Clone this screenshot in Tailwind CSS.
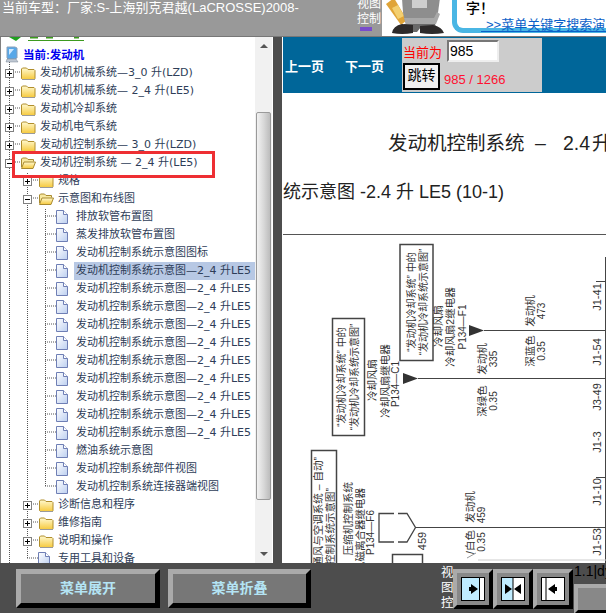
<!DOCTYPE html>
<html lang="zh">
<head>
<meta charset="utf-8">
<script src="https://cdn.jsdelivr.net/npm/@tailwindcss/browser@4"></script>
</head>
<body class="m-0 overflow-hidden bg-[#4d4d4d]">
<svg class="absolute w-0 h-0">
  <defs>
    <linearGradient id="fg" x1="0" y1="0" x2="0" y2="1"><stop offset="0" stop-color="#fff9cf"/><stop offset="1" stop-color="#f6c93c"/></linearGradient>
    <linearGradient id="pg" x1="0" y1="0" x2="1" y2="1"><stop offset="0" stop-color="#ffffff"/><stop offset="1" stop-color="#bccff0"/></linearGradient>
    <symbol id="folder" viewBox="0 0 16 14"><path d="M1.500 12.500V3l1-1h4l1.500 1.500h6l1 1v8l-1 1h-11.500z" fill="url(#fg)" stroke="#b08e2c"/><path d="M2 13.500h13" stroke="#9a9a9a"/></symbol>
    <symbol id="open" viewBox="0 0 16 14"><path d="M1.500 11V3l1-1h4l1.500 1.500h5.500v2" fill="#f8e9a0" stroke="#a98a30"/><path d="M1.500 12.500l2.500-6.500h11.500l-2.500 6.500z" fill="url(#fg)" stroke="#a98a30"/></symbol>
    <symbol id="page" viewBox="0 0 12 14"><path d="M.5.500h7l4 4v9h-11z" fill="url(#pg)" stroke="#6f7fb5"/><path d="M7.500.500v4h4" fill="#fff" stroke="#6f7fb5"/></symbol>
    <symbol id="plus" viewBox="0 0 9 9"><rect x=".5" y=".5" width="8" height="8" fill="#fff" stroke="#808080"/><path d="M2 4.500h5M4.500 2v5" stroke="#000"/></symbol>
    <symbol id="minus" viewBox="0 0 9 9"><rect x=".5" y=".5" width="8" height="8" fill="#fff" stroke="#808080"/><path d="M2 4.500h5" stroke="#000"/></symbol>
  </defs>
</svg>

<div class="w-[606px] h-[613px] flex flex-col overflow-hidden font-['Liberation_Sans','Noto_Sans_CJK_SC',sans-serif]">

  <!-- header -->
  <header class="h-[36px] shrink-0 bg-[#999999] flex overflow-hidden">
    <div class="w-[357px] shrink-0 pl-[2px] text-[13px] leading-[15px] text-white whitespace-nowrap overflow-hidden">当前车型：厂家:S-上海别克君越(LaCROSSE)2008-</div>
    <div class="w-[25px] shrink-0 text-[12px] leading-[15px] text-white -mt-[3px]">视图控制<div class="w-[12px] h-[4px] mt-[0px] ml-[3px] bg-[#6a2be0]/70"></div></div>
    <svg class="w-[67px] h-[36px] shrink-0 bg-white" viewBox="0 0 67 36">
      <path d="M4 4L12 -2L25 20L19 25z" fill="#e0a438"/>
      <path d="M10 8l6-3 6 11-6 3z" fill="#f3cf70"/>
      <path d="M20 -2h38l-3 22-3 5H24l-3-12z" fill="#8e8e8e"/>
      <path d="M30 0h15v8H30z" fill="#cfcfcf"/>
      <path d="M22 18h30l3-6 3 2-4 10H24z" fill="#a8a8a8"/>
      <path d="M22 24h31l3 8H42l-3-5-4 5H19z" fill="#6a6a6a"/>
      <path d="M10 33q1-7 10-9l11 1v8q-11 2-21 0zM38 33v-7l13-1q9 2 11 8-12 2-24 0z" fill="#2d2a2a"/>
    </svg>
    <div class="flex-1 min-w-0 bg-white relative overflow-hidden">
      <div class="absolute left-[3px] top-[-30px] w-[220px] h-[63px] rounded-[11px] border-[5px] border-[#4ab6e4] border-r-0"></div>
      <div class="absolute left-[17px] top-[1px] text-[14px] leading-[15px] text-black font-medium">字！</div>
      <div class="absolute left-[32px] top-[19px] pl-[5px] w-[200px] whitespace-nowrap text-[13px] leading-[12px] text-[#0a5fc8] border-b border-[#0a5fc8]">&gt;&gt;菜单关键字搜索演</div>
    </div>
  </header>

  <!-- middle -->
  <main class="h-[527px] shrink-0 flex border-t border-[#777777]">
    <!-- tree -->
    <div class="w-[273px] shrink-0 flex pl-[2px] bg-white border-l border-[#808080] relative overflow-hidden">
      <div class="w-[252px] shrink-0 relative overflow-hidden pt-[9px] text-[11px] leading-[18px] text-[#2e3d58] whitespace-nowrap font-['DejaVu_Sans','Noto_Sans_CJK_SC',sans-serif]">
        <svg class="absolute left-[-3px] top-[1px] w-[255px] h-[527px]" viewBox="0 0 255 527" fill="none" stroke="#555" stroke-dasharray="1 1">
          <path d="M9.500 24V527M27.500 135V520M45.500 171V449"/>
          <path d="M13 34h7M13 52h7M13 70h7M13 88h7M13 106h7M13 124h7"/>
          <path d="M31 142h7M31 160h7M31 466h7M31 484h7M31 502h7M27 520h11"/>
          <path d="M45 178h11M45 196h11M45 214h11M45 232h11M45 250h11M45 268h11M45 286h11M45 304h11M45 322h11M45 340h11M45 358h11M45 376h11M45 394h11M45 412h11M45 430h11M45 448h11"/>
        </svg>
        <svg class="absolute left-[3px] top-0 w-[80px] h-[6px]" viewBox="0 0 80 6"><path d="M3 0h12l-5 4z" fill="#1fa01f"/><path d="M22 3.500h56" stroke="#3c9a1e"/><path d="M24 0h8M40 0h7M68 0h5" stroke="#3c9a1e" stroke-width="3"/></svg>

        <div class="relative flex items-center h-[18px] pl-[2px]"><svg class="w-[14px] h-[18px] shrink-0" viewBox="0 0 14 18"><path d="M2 1h8l2 1v10l-3 1H3l-1-1z" fill="#58a8e8" stroke="#8aa0b8"/><path d="M4 3h5l-5 6z" fill="#cfe9ff"/><path d="M2 13h9l2 3H1z" fill="#bfc7d2" stroke="#7a8694" stroke-width=".5"/></svg><span class="ml-[4px] font-bold text-[#0000f0] text-[11.5px] font-['Liberation_Sans','Noto_Sans_CJK_SC',sans-serif]">当前:发动机</span></div>

        <div class="relative flex items-center h-[18px] pl-[2px]"><svg class="w-[9px] h-[9px] shrink-0"><use href="#plus"/></svg><svg class="w-[16px] h-[14px] ml-[6px] shrink-0"><use href="#folder"/></svg><span class="ml-[4px]">发动机机械系统—3_0 升(LZD)</span></div>
        <div class="relative flex items-center h-[18px] pl-[2px]"><svg class="w-[9px] h-[9px] shrink-0"><use href="#plus"/></svg><svg class="w-[16px] h-[14px] ml-[6px] shrink-0"><use href="#folder"/></svg><span class="ml-[4px]">发动机机械系统— 2_4 升(LE5)</span></div>
        <div class="relative flex items-center h-[18px] pl-[2px]"><svg class="w-[9px] h-[9px] shrink-0"><use href="#plus"/></svg><svg class="w-[16px] h-[14px] ml-[6px] shrink-0"><use href="#folder"/></svg><span class="ml-[4px]">发动机冷却系统</span></div>
        <div class="relative flex items-center h-[18px] pl-[2px]"><svg class="w-[9px] h-[9px] shrink-0"><use href="#plus"/></svg><svg class="w-[16px] h-[14px] ml-[6px] shrink-0"><use href="#folder"/></svg><span class="ml-[4px]">发动机电气系统</span></div>
        <div class="relative flex items-center h-[18px] pl-[2px]"><svg class="w-[9px] h-[9px] shrink-0"><use href="#plus"/></svg><svg class="w-[16px] h-[14px] ml-[6px] shrink-0"><use href="#folder"/></svg><span class="ml-[4px]">发动机控制系统— 3_0 升(LZD)</span></div>
        <div class="relative flex items-center h-[18px] pl-[2px]"><svg class="w-[9px] h-[9px] shrink-0"><use href="#minus"/></svg><svg class="w-[16px] h-[14px] ml-[6px] shrink-0"><use href="#open"/></svg><span class="ml-[4px]">发动机控制系统 — 2_4 升(LE5)</span></div>

        <div class="relative flex items-center h-[18px] pl-[20px]"><svg class="w-[9px] h-[9px] shrink-0"><use href="#plus"/></svg><svg class="w-[16px] h-[14px] ml-[6px] shrink-0"><use href="#folder"/></svg><span class="ml-[4px]">规格</span></div>
        <div class="relative flex items-center h-[18px] pl-[20px]"><svg class="w-[9px] h-[9px] shrink-0"><use href="#minus"/></svg><svg class="w-[16px] h-[14px] ml-[6px] shrink-0"><use href="#open"/></svg><span class="ml-[4px]">示意图和布线图</span></div>

        <div class="relative flex items-center h-[18px] pl-[53px]"><svg class="w-[12px] h-[14px] shrink-0"><use href="#page"/></svg><span class="ml-[8px]">排放软管布置图</span></div>
        <div class="relative flex items-center h-[18px] pl-[53px]"><svg class="w-[12px] h-[14px] shrink-0"><use href="#page"/></svg><span class="ml-[8px]">蒸发排放软管布置图</span></div>
        <div class="relative flex items-center h-[18px] pl-[53px]"><svg class="w-[12px] h-[14px] shrink-0"><use href="#page"/></svg><span class="ml-[8px]">发动机控制系统示意图图标</span></div>
        <div class="relative flex items-center h-[18px] pl-[53px]"><svg class="w-[12px] h-[14px] shrink-0"><use href="#page"/></svg><span class="ml-[6px] pl-[2px] flex-1 bg-[#b7c8e4] overflow-hidden">发动机控制系统示意图—2_4 升LE5</span></div>
        <div class="relative flex items-center h-[18px] pl-[53px]"><svg class="w-[12px] h-[14px] shrink-0"><use href="#page"/></svg><span class="ml-[8px]">发动机控制系统示意图—2_4 升LE5</span></div>
        <div class="relative flex items-center h-[18px] pl-[53px]"><svg class="w-[12px] h-[14px] shrink-0"><use href="#page"/></svg><span class="ml-[8px]">发动机控制系统示意图—2_4 升LE5</span></div>
        <div class="relative flex items-center h-[18px] pl-[53px]"><svg class="w-[12px] h-[14px] shrink-0"><use href="#page"/></svg><span class="ml-[8px]">发动机控制系统示意图—2_4 升LE5</span></div>
        <div class="relative flex items-center h-[18px] pl-[53px]"><svg class="w-[12px] h-[14px] shrink-0"><use href="#page"/></svg><span class="ml-[8px]">发动机控制系统示意图—2_4 升LE5</span></div>
        <div class="relative flex items-center h-[18px] pl-[53px]"><svg class="w-[12px] h-[14px] shrink-0"><use href="#page"/></svg><span class="ml-[8px]">发动机控制系统示意图—2_4 升LE5</span></div>
        <div class="relative flex items-center h-[18px] pl-[53px]"><svg class="w-[12px] h-[14px] shrink-0"><use href="#page"/></svg><span class="ml-[8px]">发动机控制系统示意图—2_4 升LE5</span></div>
        <div class="relative flex items-center h-[18px] pl-[53px]"><svg class="w-[12px] h-[14px] shrink-0"><use href="#page"/></svg><span class="ml-[8px]">发动机控制系统示意图—2_4 升LE5</span></div>
        <div class="relative flex items-center h-[18px] pl-[53px]"><svg class="w-[12px] h-[14px] shrink-0"><use href="#page"/></svg><span class="ml-[8px]">发动机控制系统示意图—2_4 升LE5</span></div>
        <div class="relative flex items-center h-[18px] pl-[53px]"><svg class="w-[12px] h-[14px] shrink-0"><use href="#page"/></svg><span class="ml-[8px]">发动机控制系统示意图—2_4 升LE5</span></div>
        <div class="relative flex items-center h-[18px] pl-[53px]"><svg class="w-[12px] h-[14px] shrink-0"><use href="#page"/></svg><span class="ml-[8px]">燃油系统示意图</span></div>
        <div class="relative flex items-center h-[18px] pl-[53px]"><svg class="w-[12px] h-[14px] shrink-0"><use href="#page"/></svg><span class="ml-[8px]">发动机控制系统部件视图</span></div>
        <div class="relative flex items-center h-[18px] pl-[53px]"><svg class="w-[12px] h-[14px] shrink-0"><use href="#page"/></svg><span class="ml-[8px]">发动机控制系统连接器端视图</span></div>

        <div class="relative flex items-center h-[18px] pl-[20px]"><svg class="w-[9px] h-[9px] shrink-0"><use href="#plus"/></svg><svg class="w-[16px] h-[14px] ml-[6px] shrink-0"><use href="#folder"/></svg><span class="ml-[4px]">诊断信息和程序</span></div>
        <div class="relative flex items-center h-[18px] pl-[20px]"><svg class="w-[9px] h-[9px] shrink-0"><use href="#plus"/></svg><svg class="w-[16px] h-[14px] ml-[6px] shrink-0"><use href="#folder"/></svg><span class="ml-[4px]">维修指南</span></div>
        <div class="relative flex items-center h-[18px] pl-[20px]"><svg class="w-[9px] h-[9px] shrink-0"><use href="#plus"/></svg><svg class="w-[16px] h-[14px] ml-[6px] shrink-0"><use href="#folder"/></svg><span class="ml-[4px]">说明和操作</span></div>
        <div class="relative flex items-center h-[18px] pl-[35px]"><svg class="w-[12px] h-[14px] shrink-0"><use href="#page"/></svg><span class="ml-[8px]">专用工具和设备</span></div>
      </div>
      <!-- scrollbar -->
      <div class="w-[17px] shrink-0 bg-[#f1f1f1] flex flex-col items-center relative">
        <div class="h-[18px] w-full flex items-center justify-center"><div class="w-0 h-0 border-x-[4px] border-x-transparent border-b-[4px] border-b-[#555555]"></div></div>
        <div class="mt-[57px] h-[388px] w-[15px] rounded-[2px] border border-[#9a9a9a] bg-gradient-to-r from-[#f2f2f2] via-[#d9d9d9] to-[#bcbcbc]"></div>
        <div class="mt-auto h-[18px] w-full flex items-center justify-center"><div class="w-0 h-0 border-x-[4px] border-x-transparent border-t-[4px] border-t-[#555555]"></div></div>
      </div>
      <!-- highlight marker -->
      <div class="absolute left-[11px] top-[114px] w-[203px] h-[27px] border-[3px] border-[#ee2f33]"></div>
    </div>

    <!-- splitter -->
    <div class="w-[9px] shrink-0 bg-[#4d4d4d]"></div>

    <!-- document -->
    <section class="flex-1 min-w-0 bg-white flex flex-col overflow-hidden border-l border-[#ffffff]">
      <div class="h-[56px] shrink-0 bg-[#006699] flex">
        <div class="w-[119px] shrink-0 flex items-center gap-[21px] pl-[2px] pt-[3px] text-[13px] font-bold text-white whitespace-nowrap"><span>上一页</span><span>下一页</span></div>
        <form class="w-[140px] h-[54px] mt-[1px] shrink-0 bg-[#cccccc] pl-[1px]">
          <div class="flex items-start h-[25px]">
            <span class="mt-[7px] text-[13px] leading-[16px] text-[#ff0000]">当前为</span>
            <div class="ml-[5px] mt-[2px] w-[52px] h-[22px] bg-white border-2 border-t-[#777777] border-l-[#777777] border-r-[#eeeeee] border-b-[#eeeeee] pl-[1px] text-[14px] leading-[18px] text-black">985</div>
          </div>
          <div class="flex items-end">
            <div class="w-[37px] h-[27px] bg-[#efefef] border-2 border-black text-center text-[14px] leading-[21px] text-black">跳转</div>
            <span class="ml-[4px] mb-[3px] text-[13px] leading-[14px] text-[#ff1030]">985 / 1266</span>
          </div>
        </form>
      </div>
      <svg class="w-[323px] h-[470px] shrink-0" viewBox="283 94 323 470" font-family="'Liberation Sans','Noto Sans CJK SC',sans-serif" fill="#333">
        <text y="151" font-size="19.500" fill="#222"><tspan x="388">发动机控制系统</tspan><tspan x="535">–</tspan><tspan x="563">2.4</tspan><tspan x="592">升</tspan></text>
        <text x="283" y="199" font-size="18" fill="#222">统示意图 -2.4 升 LE5 (10-1)</text>
        <path d="M283 235.500H606" stroke="#555"/>
        <g fill="none" stroke="#444">
          <rect x="400" y="245.500" width="33" height="116" stroke-width="1.500"/>
          <rect x="332.500" y="319.500" width="32" height="117" stroke-width="1.500"/>
          <rect x="311.500" y="451.500" width="25" height="120" stroke-width="1.500"/>
          <rect x="392.500" y="555.500" width="30" height="20" stroke-width="1.500"/>
          <path d="M484 331.500H605M418 379.500H605M416 528.500H605M605.500 258V564"/>
          <path d="M596 282.500h10M596 478.500h10"/>
          <path d="M394 514.500H379V543H394M398 514.500h9L415.500 528.500 407 543H398" stroke-width="1.300"/>
          <path d="M467 559l9-5" stroke="#999"/>
          <path d="M478 561H606" stroke="#ccc"/>
        </g>
        <path d="M469 326v11l15-5.500zM403 374v11l15-5.500z" fill="#333"/>
        <g font-size="10" text-anchor="middle">
          <text transform="translate(415 303) rotate(-90)">“发动机冷却系统” 中的</text>
          <text transform="translate(427 303) rotate(-90)">“发动机冷却系统示意图”</text>
          <text transform="translate(345 378) rotate(-90)">“发动机冷却系统” 中的</text>
          <text transform="translate(358 378) rotate(-90)">“发动机冷却系统示意图”</text>
          <text transform="translate(442 327) rotate(-90)" font-size="10.500">冷却风扇</text>
          <text transform="translate(454 328) rotate(-90)" font-size="10.500">冷却风扇2继电器</text>
          <text transform="translate(466 328) rotate(-90)">P134—F1</text>
          <text transform="translate(376 381) rotate(-90)" font-size="10.500">冷却风扇</text>
          <text transform="translate(389 382) rotate(-90)" font-size="10.500">冷却风扇继电器</text>
          <text transform="translate(399 385) rotate(-90)">P134—C1</text>
          <text transform="translate(534 312) rotate(-90)" font-size="10.500">发动机</text>
          <text transform="translate(545 312) rotate(-90)">473</text>
          <text transform="translate(534 352) rotate(-90)" font-size="10.500">深蓝色</text>
          <text transform="translate(545 352) rotate(-90)">0.35</text>
          <text transform="translate(486 360) rotate(-90)" font-size="10.500">发动机</text>
          <text transform="translate(497 360) rotate(-90)">335</text>
          <text transform="translate(486 402) rotate(-90)" font-size="10.500">深绿色</text>
          <text transform="translate(497 402) rotate(-90)">0.35</text>
          <text transform="translate(601 298) rotate(-90)" font-size="11">J1-41</text>
          <text transform="translate(601 353) rotate(-90)" font-size="11">J1-54</text>
          <text transform="translate(601 398) rotate(-90)" font-size="11">J3-49</text>
          <text transform="translate(601 443) rotate(-90)" font-size="11">J1-3</text>
          <text transform="translate(601 493) rotate(-90)" font-size="11">J1-10</text>
          <text transform="translate(601 543) rotate(-90)" font-size="11">J1-53</text>
          <text transform="translate(474 508) rotate(-90)" font-size="10.500">发动机</text>
          <text transform="translate(485 516) rotate(-90)">459</text>
          <text transform="translate(474 543) rotate(-90)" font-size="10.500">/白色</text>
          <text transform="translate(485 543) rotate(-90)">0.35</text>
          <text transform="translate(426 542) rotate(-90)" font-size="11">459</text>
        </g>
        <g font-size="10.500" text-anchor="end">
          <text transform="translate(322 458) rotate(-90)">“通风与空调系统 – 自动”</text>
          <text transform="translate(334 489) rotate(-90)">缩机控制系统示意图”</text>
          <text transform="translate(352 483) rotate(-90)">压缩机控制系统</text>
          <text transform="translate(364 489) rotate(-90)">电磁离合器继电器</text>
          <text transform="translate(374 511) rotate(-90)" font-size="10">P134—F6</text>
        </g>
      </svg>
    </section>
  </main>

  <!-- footer -->
  <footer class="flex-1 min-h-0 bg-[#4d4d4d] flex items-start pt-[6px] pl-[16px]">
    <button class="w-[144px] h-[39px] shrink-0 bg-[#777777] border-[5px] border-t-[#aaaaaa] border-l-[#aaaaaa] border-r-black border-b-black text-[14px] font-bold text-[#b4e4f4]">菜单展开</button>
    <button class="ml-[8px] w-[143px] h-[39px] shrink-0 bg-[#777777] border-[5px] border-t-[#aaaaaa] border-l-[#aaaaaa] border-r-black border-b-black text-[14px] font-bold text-[#b4e4f4]">菜单折叠</button>
    <div class="ml-[130px] w-[12px] -mt-[3px] shrink-0 text-[12.500px] leading-[15px] text-white">视图控</div>
    <button class="w-[40px] h-[40px] shrink-0 bg-[#888888] border-[4px] border-t-[#aaaaaa] border-l-[#aaaaaa] border-r-black border-b-black flex items-center justify-center">
      <svg class="w-[24px] h-[24px]" viewBox="0 0 24 24"><rect x=".5" y=".5" width="23" height="23" fill="#c0ecff" stroke="#000"/><path d="M18.500 .5h5v23h-5z" fill="#fff" stroke="#000"/><path d="M10 7v3H8v4h2v3l7-5z" fill="#000"/></svg>
    </button>
    <button class="w-[40px] h-[40px] shrink-0 bg-[#888888] border-[4px] border-t-[#aaaaaa] border-l-[#aaaaaa] border-r-black border-b-black flex items-center justify-center">
      <svg class="w-[24px] h-[24px]" viewBox="0 0 24 24"><rect x=".5" y=".5" width="23" height="23" fill="#fff" stroke="#000"/><rect x=".5" y=".5" width="11.500" height="23" fill="#c0ecff" stroke="#000"/><path d="M4 7v10l7-5zM20 7v10l-7-5z" fill="#000"/></svg>
    </button>
    <button class="w-[40px] h-[40px] shrink-0 bg-[#888888] border-[4px] border-t-[#aaaaaa] border-l-[#aaaaaa] border-r-black border-b-black flex items-center justify-center">
      <svg class="w-[24px] h-[24px]" viewBox="0 0 24 24"><rect x=".5" y=".5" width="23" height="23" fill="#fff" stroke="#000"/><path d="M.5.500H5v23H.5z" fill="#fff" stroke="#000"/><path d="M14 7v3h2v4h-2v3l-7-5z" fill="#000"/></svg>
    </button>
    <div class="w-[33px] shrink-0 overflow-hidden -mt-[6px] pl-[1px]">
      <div class="text-[14px] leading-[16px] text-black whitespace-nowrap">1.1|dy</div>
      <div class="mt-[5px] h-[30px] w-[40px] bg-[#888888] border-[4px] border-t-[#aaaaaa] border-l-[#aaaaaa] border-r-black border-b-black"></div>
    </div>
  </footer>
</div>
</body>
</html>
